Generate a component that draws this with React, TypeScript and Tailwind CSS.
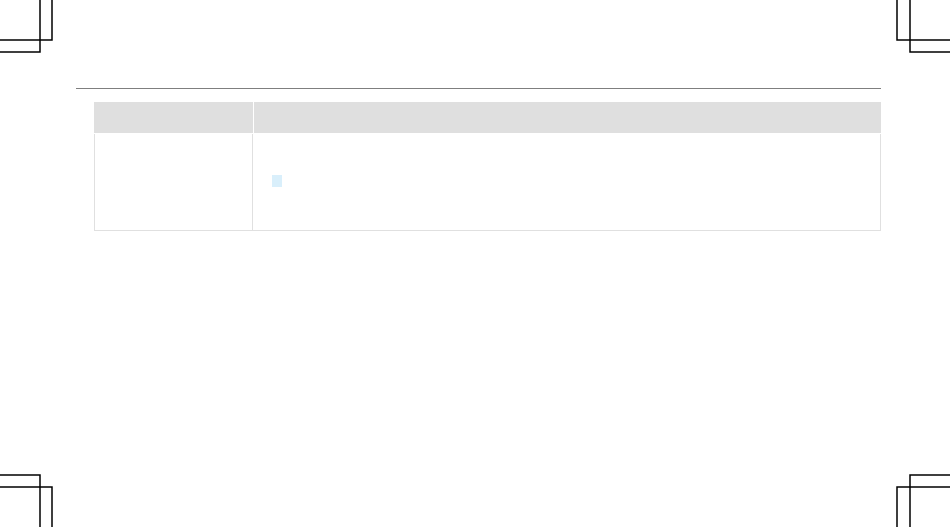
import React from "react";

// crop marks in the four corners of the page
function CropMarks() {
  const marks = [
    "40,0 40,52 0,52",
    "52,0 52,40 0,40",
    "897,0 897,40 950,40",
    "910,0 910,52 950,52",
    "0,475 40,475 40,527",
    "0,487 52,487 52,527",
    "950,475 910,475 910,527",
    "950,487 897,487 897,527",
  ];
  return (
    <svg className="absolute inset-0 pointer-events-none" width={950} height={527} viewBox="0 0 950 527">
      {marks.map((p, i) => (
        <polyline key={i} points={p} fill="none" stroke="#000" strokeWidth={1.5} />
      ))}
    </svg>
  );
}

export default function App() {
  return (
    <div className="relative w-[950px] h-[527px] bg-white overflow-hidden font-['Liberation_Sans',sans-serif]">
      <CropMarks />
      <div className="pt-[88px]">
        <div className="ml-[76px] w-[805px] h-px bg-[#7f7f7f]" />
        <div className="ml-[94px] mt-[13px] w-[787px]">
          <div className="flex gap-px h-[31px]">
            <div className="w-[159px] bg-[#dfdfdf]" />
            <div className="flex-1 bg-[#dfdfdf]" />
          </div>
          <div className="mt-px flex h-[97px] border-x border-b border-[#e0e0e0]">
            <div className="w-[158px] border-r border-[#e0e0e0]" />
            <div className="flex-1 pl-[19px] pt-[41px]">
              <div className="w-[10px] h-[12px] bg-[#d9effb]" />
            </div>
          </div>
        </div>
      </div>
    </div>
  );
}
